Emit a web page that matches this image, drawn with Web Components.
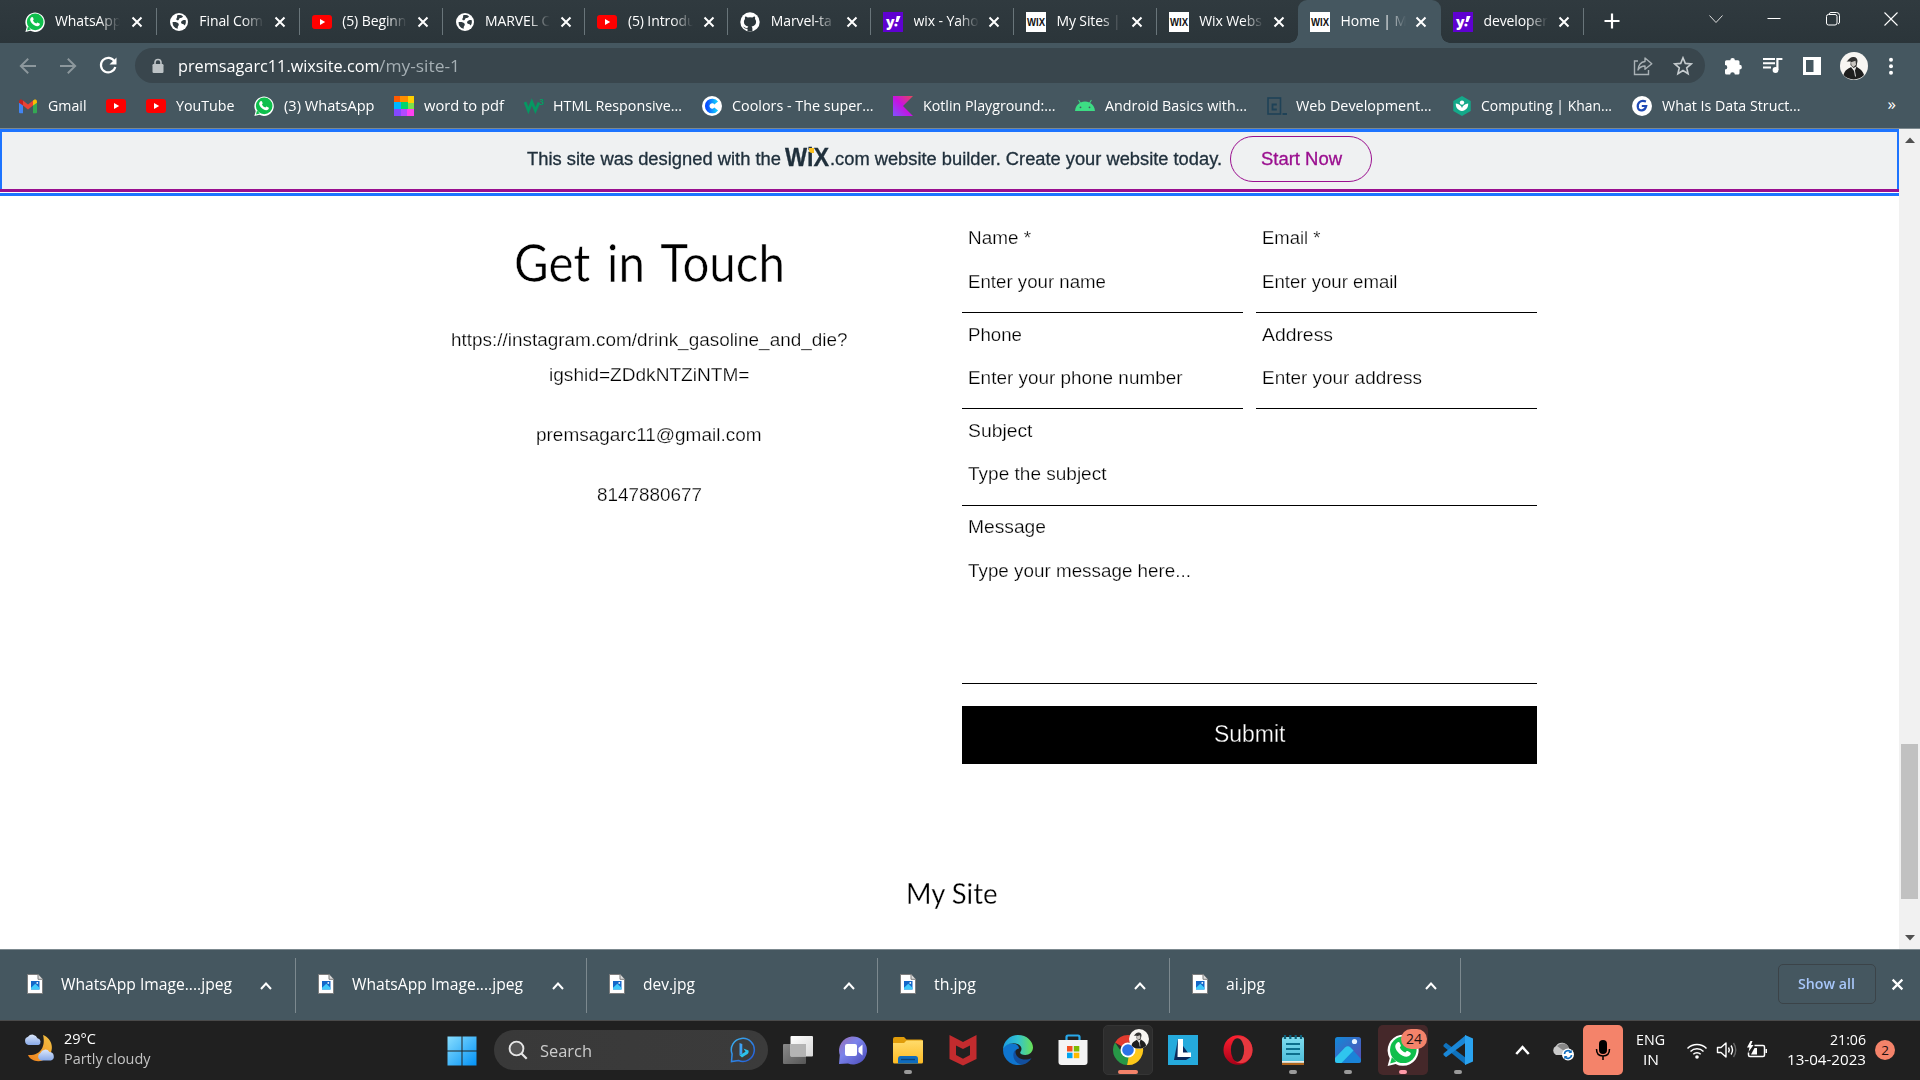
<!DOCTYPE html>
<html lang="en">
<head>
<meta charset="utf-8">
<title>Home | My Site 1</title>
<style>
  html, body { margin: 0; width: 1920px; height: 1080px; overflow: hidden; background: #fff; }
  body { font-family: "Open Sans", "Noto Sans", sans-serif; }
</style>
</head>
<body>
<desktop-screen></desktop-screen>
<script>
const ICONS = {
  whatsapp: [20, 20, `<path d="M.4 20l1.3-4.9A9.7 9.7 0 1 1 5.400 18.700z" fill="#fff"/><circle cx="10.200" cy="9.900" r="8.300" fill="#0fbf4c"/><path d="M2 18.400l1-3.800 2.800 2.800z" fill="#0fbf4c"/><path d="M6.300 5.500c.7-.8 1.400-.6 1.700.1l.6 1.400c.2.500-.1.800-.6 1.400.7 1.500 1.800 2.500 3.400 3.200.7-.8.900-1.200 1.500-.9l1.600.8c.6.300.4 1.100-.1 1.700-1.200 1.400-3 1.200-4.600.4-2.200-1.100-4.200-3.200-4.600-5.300-.2-1.200.3-2.100 1.100-2.800z" fill="#fff"/>`],
  globe: [20, 20, `<circle cx="10" cy="10" r="9" fill="#fff"/><path d="M3.500 10.200c2.600-.4 5.500.2 6.200 1.800.5 1.300-1 2-1 3.200v1.600A7 7 0 0 1 3.500 10.200zM8 3.400c2.500-.8 4.600-.2 6 1-.7 1.200-2 1.300-3 1.600-1.200.4-.6 1.700-1.800 2.200-.9.300-1.800-.2-1.900-1 0-1.200 1.300-1.500.7-3.800zM16.600 8c.6 2 .2 4-.9 5.600-.6-.9-.9-1.500-1.900-1.700-1.300-.2-2.100-1-1.600-2.200.6-1.400 2.500-1.900 4.400-1.700z" fill="#303b40"/>`],
  youtube: [20, 20, `<rect y="3" width="20" height="14" rx="3" fill="#f00"/><path d="M8 7l5.200 3L8 13z" fill="#fff"/>`],
  github: [20, 20, `<circle cx="10" cy="10" r="9.700" fill="#fff"/><path d="M7.500 19.500v-2.800c-3 .6-3.200-1.600-4.500-2 1.600-.4 2 1.200 3 1.300.700.100 1.200 0 1.600-.3.100-.6.400-1 .8-1.300-2.700-.3-4.500-1.500-4.500-4.600 0-1.100.4-2 1.100-2.700-.3-.8-.200-1.800.2-2.600 1 0 1.800.5 2.500 1a9 9 0 0 1 4.700 0c.7-.5 1.500-1 2.500-1 .4.800.4 1.800.1 2.600.7.700 1.100 1.600 1.100 2.700 0 3.100-1.900 4.300-4.500 4.600.5.500.8 1.200.8 2.100v3z" fill="#2c363b"/>`],
  yahoo: [20, 20, `<rect width="20" height="20" fill="#5f01d1"/><text x="3" y="14.500" font-family="Open Sans" font-weight="800" font-size="14" fill="#fff" textLength="9">y</text><path d="M13.700 4h3.800l-2.300 6h-2.600z" fill="#fff"/><circle cx="12.900" cy="13" r="1.600" fill="#fff"/>`],
  wix: [20, 20, `<rect width="20" height="20" fill="#fff"/><text x="1" y="13.800" font-family="Liberation Sans" font-weight="700" font-size="10.500" fill="#111" textLength="18" lengthAdjust="spacingAndGlyphs">WIX</text>`],
  x: [12, 12, `<path d="M1.500 1.500l9 9m0-9l-9 9" stroke="#fff" stroke-width="2" fill="none"/>`],
  plus: [16, 16, `<path d="M8 .5v15M.5 8h15" stroke="#fff" stroke-width="2.200"/>`],
  winChevron: [16, 16, `<path d="M1.500 4.500L8 11.500l6.500-7" stroke="#ddd" fill="none"/>`],
  winMin: [16, 16, `<path d="M1.500 7.500h13" stroke="#fff"/>`],
  winMax: [16, 16, `<rect x="1.500" y="3.500" width="10.500" height="10.500" rx="2" stroke="#fff" fill="none"/><path d="M4 3q.5-1.500 2-1.500h5.500q3 0 3 3v6.500q0 1.500-1.500 2" stroke="#fff" fill="none"/>`],
  winClose: [16, 16, `<path d="M1.500 1.500l13 13m0-13l-13 13" stroke="#fff" stroke-width="1.100"/>`],
  back: [18, 18, `<path d="M17 9H2m7.200-7.300L1.800 9l7.400 7.300" stroke="#8d989d" stroke-width="1.900" fill="none"/>`],
  forward: [18, 18, `<path d="M1 9h15M8.800 1.700L16.200 9l-7.400 7.300" stroke="#8d989d" stroke-width="1.900" fill="none"/>`],
  reload: [20, 20, `<path d="M16.500 5.300A7.300 7.300 0 1 0 17.300 11" stroke="#fff" stroke-width="2.200" fill="none"/><path d="M18.500 1.500v7h-7z" fill="#fff"/>`],
  lock: [12, 16, `<path d="M3 7V4.500a3 3 0 0 1 6 0V7" stroke="#bdc3c6" stroke-width="1.600" fill="none"/><rect x=".5" y="6" width="11" height="9" rx="1.200" fill="#bdc3c6"/>`],
  share: [20, 20, `<path d="M5 5H1.500v13.500h14V14" stroke="#a9b1b5" stroke-width="1.400" fill="none"/><path d="M12 2l6.800 5.800L12 13.300V10c-3.500 0-5.500 1.400-7 4 .4-4.500 2.600-8 7-8.500z" stroke="#a9b1b5" stroke-width="1.400" fill="none" stroke-linejoin="round"/>`],
  star: [20, 20, `<path d="M10 1.800l2.300 5.600 6 .5-4.600 3.900 1.400 5.900L10 14.500l-5.100 3.200 1.400-5.900-4.600-3.900 6-.5z" stroke="#c6cccf" stroke-width="1.600" fill="none"/>`],
  puzzle: [20, 20, `<path d="M7.300 4.200a2.300 2.300 0 1 1 4.600 0H15q1.500 0 1.500 1.500v3.100a2.400 2.400 0 1 1 0 4.800V17q0 1.500-1.500 1.500h-3.200a2.300 2.300 0 0 0-4.600 0H3.500Q2 18.500 2 17v-3.400a2.300 2.300 0 1 0 0-4.600V5.700q0-1.500 1.500-1.500z" fill="#fff"/>`],
  media: [20, 18, `<path d="M0 2h12M0 6.300h12M0 10.600h8" stroke="#fff" stroke-width="2"/><circle cx="12.500" cy="13" r="2.900" fill="#fff"/><path d="M14.400 13V2h5" stroke="#fff" stroke-width="2.200" fill="none"/>`],
  panel: [18, 18, `<path d="M0 0h18v18H0zM3 3v12h7.500V3z" fill="#fff" fill-rule="evenodd"/>`],
  avatar: [28, 28, `<circle cx="14" cy="14" r="14" fill="#f7f5f2"/><path d="M3.500 23C5 17.500 8 17 11 15l3.500 4.500 2-5c3 2.500 6 3.500 7.500 8.500A14 14 0 0 1 3.500 23z" fill="#1e1e1e"/><path d="M6.500 9.500c2-1 2.500-4 6.500-4.500 3-.3 4.500 1.500 4.500 4l-1 5.500-3 1.500-3-3 .2-3.500z" fill="#333"/><path d="M11 10.300l4.500-1.500.5 4-2.500 2.300-2-1.600z" fill="#c9c5c0"/><path d="M14 16l1.500 8.500" stroke="#ddd"/>`],
  dots: [6, 20, `<g fill="#fff"><circle cx="3" cy="3.700" r="2"/><circle cx="3" cy="10.300" r="2"/><circle cx="3" cy="16.800" r="2"/></g>`],
  gmail: [20, 20, `<path d="M1 6.500v9.700q0 1 1 1h3V8z" fill="#4285f4"/><path d="M19 6.500v9.700q0 1-1 1h-3V8z" fill="#34a853"/><path d="M1 5.500q0-2 2-2.200l2 1.300v5L1 6.800z" fill="#c5221f"/><path d="M19 5.500q0-2-2-2.200l-2 1.300v5l4-2.800z" fill="#fbbc04"/><path d="M5 4.600l5 3.800 5-3.800v5l-5 3.800-5-3.800z" fill="#ea4335"/>`],
  grid: [20, 20, `<path fill="#ff5a00" d="M0 0h6v6H0z"/><path fill="#ff8e00" d="M6 0h8v6H6z"/><path fill="#ffd000" d="M14 0h6v7h-6z"/><path fill="#00b7ff" d="M0 6h7v7H0z"/><path fill="#00d56e" d="M7 6h7v7H7z"/><path fill="#7be04b" d="M14 7h6v6h-6z"/><path fill="#8447ff" d="M0 13h7v7H0z"/><path fill="#b14aff" d="M7 13h6v7H7z"/><path fill="#ff40f0" d="M13 13h7v7h-7z"/>`],
  w3: [20, 20, `<path d="M1 6l3.400 8.500L7.800 6l3.600 8.500L15 6.500" stroke="#059862" stroke-width="2.800" fill="none"/><text x="15.500" y="9" font-family="Open Sans" font-weight="700" font-size="8" fill="#059862">3</text>`],
  coolors: [20, 20, `<defs><linearGradient id="a"><stop stop-color="#0a50ff"/><stop offset="1" stop-color="#12c8ff"/></linearGradient></defs><circle cx="10" cy="10" r="10" fill="#fff"/><path d="M14.200 7A5 5 0 1 0 14.200 13" stroke="url(#a)" stroke-width="4.600" fill="none"/>`],
  kotlin: [20, 20, `<defs><linearGradient id="a" x1="0" y1="1" x2="1" y2="0"><stop stop-color="#7f52ff"/><stop offset=".5" stop-color="#c811e1"/><stop offset="1" stop-color="#e54857"/></linearGradient></defs><path d="M0 0h20L10 10l10 10H0z" fill="url(#a)"/>`],
  android: [20, 20, `<path d="M0 15C.3 11 2.300 8.300 4.800 6.900L3.200 4.200l.8-.5 1.700 2.800a10.500 10.500 0 0 1 8.600 0L16 3.700l.8.500-1.600 2.700C17.700 8.300 19.700 11 20 15z" fill="#3ddc84"/><circle cx="5.500" cy="11.300" r=".9" fill="#455760"/><circle cx="14.500" cy="11.300" r=".9" fill="#455760"/>`],
  cbox: [20, 20, `<rect x="1" y="2" width="12.500" height="16" fill="none" stroke="#1f4257" stroke-width="1.600"/><path d="M9.800 8.500H5.500v5h4.300" stroke="#1f4257" stroke-width="1.800" fill="none"/><path d="M15.500 18h4.500" stroke="#1f4257" stroke-width="2"/>`],
  khan: [20, 20, `<path d="M10 0l8.700 5v10L10 20l-8.700-5V5z" fill="#14a98a"/><circle cx="10" cy="6.600" r="2.200" fill="#fff"/><path d="M3.800 7.500C7 7.800 9.300 9.500 10 12c.7-2.500 3-4.200 6.200-4.500.2 4.200-2.500 7.200-6.200 7.500-3.700-.3-6.400-3.300-6.200-7.500z" fill="#fff"/>`],
  gblue: [20, 20, `<circle cx="10" cy="10" r="10" fill="#fff"/><path d="M14 5.500C8 3.500 4.800 7.500 6 12c1.200 3.500 7 3.500 8.200-2H9.800" stroke="#1f49b6" stroke-width="2.200" fill="none"/>`],
  triUp: [12, 8, `<path d="M6 1.500l5 5.500H1z" fill="#505050"/>`],
  triDown: [12, 8, `<path d="M6 6.500L11 1H1z" fill="#505050"/>`],
  file: [16, 20, `<path d="M.5.500H11l4.500 4.800v14.200H.5z" fill="#fff" stroke="#7d7d7d"/><path d="M11 .5v4.800h4.500" fill="#ddd" stroke="#7d7d7d"/><rect x="4" y="7" width="8.500" height="8.500" fill="#1467c9"/><path d="M4 15.500v-1.700l4.300-4.100 4.200 4.100v1.700z" fill="#41c9fb"/><circle cx="10.300" cy="8.900" r=".9" fill="#fff"/>`],
  up: [12, 10, `<path d="M1 8l5-5.500L11 8" stroke="#fff" stroke-width="2" fill="none"/>`],
  weather: [32, 30, `<defs><linearGradient id="m" x1="1" y1="0" x2="0" y2="1"><stop stop-color="#f3c445"/><stop offset="1" stop-color="#f0811c"/></linearGradient><linearGradient id="c" x1="0" y1="0" x2="0" y2="1"><stop stop-color="#dbe7fb"/><stop offset="1" stop-color="#88a9e8"/></linearGradient></defs><path d="M19 2c10 4 12 16 4 23-6 5-16 4-19-3 12 1 18-8 15-20z" fill="url(#m)"/><path d="M4.500 12a4.300 4.300 0 0 1-.5-8.300 5.500 5.500 0 0 1 9.500 1.500A3.600 3.600 0 0 1 14.500 12z" fill="url(#c)"/><path d="M17 27.500a4 4 0 0 1-.5-7.500 5 5 0 0 1 9-1 4.400 4.400 0 0 1 1.500 8.500z" fill="url(#c)"/>`],
  windows: [30, 30, `<defs><linearGradient id="a" gradientUnits="userSpaceOnUse" x1="0" y1="0" x2="30" y2="30"><stop stop-color="#8adfff"/><stop offset="1" stop-color="#0090f5"/></linearGradient></defs><path d="M.5.500h14v14H.5zm15 0h14v14h-14zm-15 15h14v14H.5zm15 0h14v14h-14z" fill="url(#a)"/>`],
  search: [20, 20, `<circle cx="8.500" cy="8.500" r="6.900" stroke="#e6e6e6" stroke-width="1.900" fill="#555"/><path d="M13.500 13.500l5.200 5.200" stroke="#e6e6e6" stroke-width="2.200"/>`],
  bing: [26, 26, `<defs><linearGradient id="a" x1="0" y1="0" x2="1" y2="1"><stop stop-color="#3bb4f0"/><stop offset="1" stop-color="#2257d8"/></linearGradient></defs><path d="M1.500 24.500l.6-7.500A11.500 11.500 0 1 1 8.500 23.500z" fill="none" stroke="url(#a)" stroke-width="1.500"/><path d="M9.500 6l2.800 1v9.500l-2.800 1.800z" fill="#3da2f5"/><path d="M9.500 18.300l6-3.500-2-3.300 5 2q.8 3-2.700 4.600l-3.800 2.300z" fill="#2bc2ec"/>`],
  taskview: [32, 32, `<defs><linearGradient id="a" x1="0" y1="0" x2="1" y2="1"><stop stop-color="#fff"/><stop offset="1" stop-color="#d8d8d8"/></linearGradient><linearGradient id="b" x1="0" y1="0" x2="1" y2="1"><stop stop-color="#8a8a8a"/><stop offset="1" stop-color="#565656"/></linearGradient></defs><rect x="1" y="10" width="23" height="20" rx="1" fill="url(#b)"/><rect x="8.500" y="2" width="22.500" height="20.500" rx="1" fill="url(#a)"/><path d="M8.500 10H24v12.500H8.500z" fill="#b4b4b4"/>`],
  chat: [32, 32, `<defs><linearGradient id="a" x1="0" y1="0" x2="1" y2="1"><stop stop-color="#9d6cb0"/><stop offset=".4" stop-color="#7b83eb"/><stop offset="1" stop-color="#4a4ab8"/></linearGradient></defs><path d="M2 30l.8-9A14 14 0 1 1 11 29.500z" fill="url(#a)"/><rect x="8" y="10" width="12" height="12" rx="2" fill="#fff"/><path d="M21.500 14l4-3.500v11l-4-3.500z" fill="#fff"/>`],
  folder: [32, 32, `<defs><linearGradient id="a" x1="0" y1="0" x2="0" y2="1"><stop stop-color="#ffdb6b"/><stop offset="1" stop-color="#fdbb24"/></linearGradient></defs><path d="M1 5q0-2 2-2h9l2.500 2.500H29q2 0 2 2v5H1z" fill="#e09c0a"/><path d="M1 9h11l2.500-2.500H31V28q0 1.500-1.500 1.500h-27Q1 29.500 1 28z" fill="url(#a)"/><path d="M6 29.500V25q0-3 2.500-3h15q2.500 0 2.500 3v4.500z" fill="#0f6cbd"/><path d="M9 25.500h14" stroke="#0a4378" stroke-width="1.300"/>`],
  mcafee: [32, 32, `<path d="M2.500 1L16 8l13.500-7v24L16 31.500 2.500 25zM9 11.500V21l7 3.700 7-3.700v-9.500L16 15z" fill="#c22b2e" fill-rule="evenodd"/>`],
  edge: [32, 32, `<defs><linearGradient id="a"><stop stop-color="#1b9de2"/><stop offset=".5" stop-color="#33c3d0"/><stop offset="1" stop-color="#6ae254"/></linearGradient></defs><path d="M1 16C2 11 6 9.500 10 9.500c4 0 7 2 7 5-3 .5-5 3-4.500 7 .6 4 4 8 9 8.500A15 15 0 0 1 1 16z" fill="#0f75cf"/><path d="M1 16C1.300 7 8 1 16 1c9 0 15 6.500 15 12.500 0 4.500-3.500 7.500-7.800 7.500-3.200 0-5-1-5-2.200 0-1 1.300-1.700 1.300-4 0-3-3.500-5.500-8-5.500C6 9.300 2 12.500 1 16z" fill="url(#a)"/><path d="M13.500 15.800c-5 5.200-1 14.700 7.500 14.700 3.500-.7 6.500-3 8.500-6.300-7 3.300-17 .8-16-8.400z" fill="#124f9e"/>`],
  store: [32, 32, `<path d="M9.500 8V3q0-1.500 1.500-1.500h10q1.500 0 1.500 1.500v5" fill="none" stroke="#28a8ea" stroke-width="2.200"/><path d="M1.500 6h29v22q0 3-3 3h-23q-3 0-3-3z" fill="#f4f4f4"/><path fill="#f25022" d="M10 12h5.500v5.500H10z"/><path fill="#7fba00" d="M16.800 12h5.500v5.500h-5.500z"/><path fill="#00a4ef" d="M10 18.700h5.500v5.500H10z"/><path fill="#ffb900" d="M16.800 18.700h5.500v5.500h-5.500z"/>`],
  chrome: [32, 32, `<path d="M16 16L3 8.500A15 15 0 0 1 29 8.500H16z" fill="#e23b2e"/><path d="M16 16l13-7.500A15 15 0 0 1 15 31z" fill="#fdc81a"/><path d="M3 8.500L11 20l6 1-2 10A15 15 0 0 1 3 8.500z" fill="#279847"/><circle cx="16" cy="16" r="7.500" fill="#fff"/><circle cx="16" cy="16" r="5.800" fill="#2b73e8"/>`],
  lapp: [32, 32, `<rect x="1" y="1" width="30" height="30" fill="#25aadc"/><path d="M11 5L7 26h12l5-3z" fill="#0b2a5c"/><path d="M11 5h5v13.500h8V23H10.500z" fill="#fff"/>`],
  opera: [32, 32, `<defs><linearGradient id="a" x1="0" y1="0" x2="0" y2="1"><stop stop-color="#ff2030"/><stop offset="1" stop-color="#a80018"/></linearGradient></defs><ellipse cx="16" cy="16" rx="14.500" ry="14.800" fill="url(#a)"/><path d="M13 4.500c8-5 17.500 2 17.500 11.500S21 32.500 13 27.500h3V4.500z" fill="#e8383f"/><ellipse cx="15.500" cy="16" rx="6.600" ry="11.700" fill="#202020"/>`],
  notepad: [32, 32, `<defs><linearGradient id="a" x1="0" y1="0" x2="0" y2="1"><stop stop-color="#7fdcee"/><stop offset="1" stop-color="#48bbd8"/></linearGradient></defs><rect x="5" y="3" width="22" height="28" rx="1.500" fill="url(#a)"/><path d="M5 28.500h22V31H5z" fill="#b0651c"/><path d="M5 27h22v1.700H5z" fill="#f0ece4"/><path d="M8 1v4m5.300-4v4M18.700 1v4M24 1v4" stroke="#0d607a" stroke-width="2.200"/><path d="M9 10h14M9 15h14M9 20h14" stroke="#0d6f8c" stroke-width="2"/>`],
  photos: [32, 32, `<defs><linearGradient id="a" x1="0" y1="0" x2="1" y2="1"><stop stop-color="#1289d8"/><stop offset="1" stop-color="#5b4cb4"/></linearGradient></defs><rect x="3" y="3" width="26" height="26" rx="2.500" fill="url(#a)"/><path d="M16 12q1.500 0 3 2l10 11v1.500q0 2.500-2.500 2.500H9z" fill="#1a84d8"/><path d="M3 24l10-10.500q2.700-2.700 5.500 0l3 3L9.500 29h-4Q3 29 3 26.500z" fill="#2fc6ee"/><circle cx="22.500" cy="7.500" r="2.600" fill="#e8f4ff"/>`],
  vscode: [32, 32, `<path d="M1.500 11L4 8.700 24 24v7L1.500 12.500z" fill="#0f72bd"/><path d="M1.500 21L4 23.300 24 8.500V1L1.500 19.500z" fill="#1a87d7"/><path d="M23 1l8 3.500v23L23 31z" fill="#2aa3f0"/>`],
  cloud: [24, 24, `<path d="M5 17a5 5 0 0 1 0-9 7 7 0 0 1 12.500 1.500q2 2 1 7.500z" fill="#c9c9c9"/><path d="M6 8a7 7 0 0 1 12 2l-5 3z" fill="#888"/><circle cx="17" cy="16.500" r="6" fill="#fff"/><path d="M13.500 16a3.600 3.600 0 0 1 6.500-1.800M20.500 17A3.600 3.600 0 0 1 14 18.800" stroke="#0f6cbd" stroke-width="1.600" fill="none"/><path d="M20.700 11.800v3.200h-3.200zM13.300 21.200V18h3.200z" fill="#0f6cbd"/>`],
  mic: [20, 24, `<rect x="6" y="2" width="8" height="14" rx="4" fill="#000"/><path d="M3.500 11c0 4.500 2.500 7 6.500 7s6.500-2.500 6.500-7M10 18v4" stroke="#000" stroke-width="1.500" fill="none"/>`],
  wifi: [22, 20, `<g fill="none" stroke="#fff" stroke-width="1.500"><path d="M1.500 8.500a13.500 13.500 0 0 1 19 0"/><path d="M4.500 11.500a9.300 9.300 0 0 1 13 0"/><path d="M7.300 14.300a5.300 5.300 0 0 1 7.400 0"/></g><circle cx="11" cy="17" r="1.800" fill="#fff"/>`],
  sound: [22, 20, `<path d="M1.500 7.500H5L10 3v14L5 12.500H1.500z" fill="none" stroke="#fff" stroke-width="1.400" stroke-linejoin="round"/><path d="M12.500 7.500q1.600 2.500 0 5M15 5.500q3 4.500 0 9" fill="none" stroke="#fff" stroke-width="1.400"/><path d="M17.500 3q4.500 7 0 14" fill="none" stroke="#666" stroke-width="1.400"/>`],
  battery: [22, 20, `<path d="M8.500 5.500H17q1.500 0 1.500 1.500v8q0 1.500-1.500 1.500H4q-1.500 0-1.500-1.500v-2.500" fill="none" stroke="#fff" stroke-width="1.500"/><path d="M19.500 9h1.500v4h-1.500z" fill="#fff"/><path d="M5 14.500L8.500 8H11v6.500z" fill="#fff"/><path d="M4.500 1L1 7.500h2.500L2.500 12l5-7H5L6.500 1z" fill="#fff"/>`],
};

function define(name, css, html, setup) {
  const tpl = document.createElement('template');
  tpl.innerHTML = `<style>:host{display:block;box-sizing:border-box}*{box-sizing:border-box}${css}</style>${html}`;
  customElements.define(name, class extends HTMLElement {
    connectedCallback() {
      if (this.shadowRoot) return;
      const root = this.attachShadow({ mode: 'open' });
      const frag = tpl.content.cloneNode(true);
      if (this.hasAttribute('icon')) frag.querySelector('.icon').setAttribute('name', this.getAttribute('icon'));
      root.append(frag);
      if (setup) setup(this, root);
    }
  });
}

/* Inline SVG picked by name */
define('ui-icon', ':host{display:block;flex:none}svg{display:block}', '<div></div>', (el, root) => {
  const [w, h, body] = ICONS[el.getAttribute('name')];
  const s = +(el.getAttribute('size') || w);
  root.querySelector('div').innerHTML = `<svg width="${s}" height="${s * h / w}" viewBox="0 0 ${w} ${h}">${body}</svg>`;
});

define('browser-tab', `
  :host{display:flex;align-items:center;width:142.85px;height:43px;padding:0 12.500px 0 12px;border-right:1px solid #5f6b71;color:#fff;font-size:14px;position:relative;border-image:linear-gradient(transparent 9px,#69757a 9px,#69757a 34px,transparent 34px) 1}
  :host([flat]){border-color:transparent;border-image:none}
  :host([active]){background:#455760;border-radius:9px 9px 0 0;border-image:none;border-color:transparent}
  :host([active])::before,:host([active])::after{content:"";position:absolute;bottom:0;width:9px;height:9px}
  :host([active])::before{left:-9px;background:radial-gradient(circle at 0 0,transparent 8.5px,#455760 9px)}
  :host([active])::after{right:-10px;background:radial-gradient(circle at 100% 0,transparent 8.5px,#455760 9px)}
  .t{margin-left:10.500px;width:65px;overflow:hidden;white-space:nowrap;line-height:41px;padding-bottom:2px;letter-spacing:-.1px;-webkit-mask-image:linear-gradient(90deg,#000 44px,transparent 65px)}
  .close{margin-left:auto}`,
  `<ui-icon class="icon"></ui-icon><div class="t"><slot></slot></div><ui-icon class="close" name="x"></ui-icon>`);

define('tab-strip', `
  :host{display:flex;height:43px;background:linear-gradient(#303a3f,#2b353a);padding-left:12.500px}
  .first{width:144.350px}
  .last{width:141.350px}
  .plus{margin:13px 0 0 20px}
  .win{display:flex;gap:42.500px;margin:11px 21px 0 auto}
  .drop{margin-right:3px}`,
  `<browser-tab class="first" icon="whatsapp">WhatsApp</browser-tab><browser-tab icon="globe">Final Com</browser-tab><browser-tab icon="youtube">(5) Beginn</browser-tab><browser-tab icon="globe">MARVEL C</browser-tab><browser-tab icon="youtube">(5) Introdu</browser-tab><browser-tab icon="github">Marvel-ta</browser-tab><browser-tab icon="yahoo">wix - Yaho</browser-tab><browser-tab icon="wix">My Sites |</browser-tab><browser-tab class="last" icon="wix" flat>Wix Webs</browser-tab><browser-tab icon="wix" active>Home | M</browser-tab><browser-tab icon="yahoo">developer</browser-tab>
   <ui-icon class="plus" name="plus"></ui-icon>
   <div class="win"><ui-icon name="winChevron"></ui-icon><ui-icon name="winMin"></ui-icon><ui-icon name="winMax"></ui-icon><ui-icon name="winClose"></ui-icon></div>`);

define('address-bar', `
  :host{display:flex;align-items:center;height:45px;padding:0 26px 0 19px;background:#455760}
  .nav{display:flex;gap:21.500px;width:116px;align-items:center;flex:none}
  .box{display:flex;align-items:center;width:1570px;height:35px;border-radius:18px;background:#39464d;padding:0 12.500px 0 17px;font-size:16.500px;color:#fff;flex:none}
  .u{display:flex;margin-left:13.500px;line-height:35px}
  .dim{color:#a5afb4}
  .r{display:flex;gap:20px;margin-left:auto}
  .ext{display:flex;align-items:center;justify-content:space-between;width:171px;margin-left:18px}`,
  `<div class="nav"><ui-icon name="back"></ui-icon><ui-icon name="forward"></ui-icon><ui-icon name="reload"></ui-icon></div>
   <div class="box"><ui-icon name="lock"></ui-icon><div class="u"><fit-text w="201.500">premsagarc11.wixsite.com</fit-text><fit-text class="dim" w="81">/my-site-1</fit-text></div>
   <div class="r"><ui-icon name="share"></ui-icon><ui-icon name="star"></ui-icon></div></div>
   <div class="ext"><ui-icon name="puzzle"></ui-icon><ui-icon name="media"></ui-icon><ui-icon name="panel"></ui-icon><ui-icon name="avatar"></ui-icon><ui-icon name="dots"></ui-icon></div>`);

/* One bookmark: 20px icon, then a label fitted to its width */
define('book-mark', `:host{display:flex;align-items:center;gap:9.500px;margin-right:20px;color:#fff;font-size:14px;line-height:36px}`,
  `<ui-icon class="icon"></ui-icon><slot></slot>`);

define('bookmark-bar', `
  :host{display:flex;height:41px;padding:0 24px 5px 18px;background:#455760;border-bottom:1px solid #7c898f}
  .more{margin-left:auto;color:#fff;font-size:17px;line-height:31px}`,
  `<book-mark icon="gmail"><fit-text w="38.500">Gmail</fit-text></book-mark><book-mark icon="youtube"></book-mark><book-mark icon="youtube"><fit-text w="58.500">YouTube</fit-text></book-mark><book-mark icon="whatsapp"><fit-text w="90.500">(3) WhatsApp</fit-text></book-mark><book-mark icon="grid"><fit-text w="80">word to pdf</fit-text></book-mark><book-mark icon="w3"><fit-text w="129">HTML Responsive...</fit-text></book-mark><book-mark icon="coolors"><fit-text w="141.500">Coolors - The super...</fit-text></book-mark><book-mark icon="kotlin"><fit-text w="132.500">Kotlin Playground:...</fit-text></book-mark><book-mark icon="android"><fit-text w="142">Android Basics with...</fit-text></book-mark><book-mark icon="cbox"><fit-text w="135.500">Web Development...</fit-text></book-mark><book-mark icon="khan"><fit-text w="131">Computing | Khan...</fit-text></book-mark><book-mark icon="gblue"><fit-text w="138.500">What Is Data Struct...</fit-text></book-mark><span class="more">»</span>`);

define('wix-banner', `
  :host{height:67px;background:#fff;border-bottom:3px solid #1d74ff;font-family:"Liberation Sans",sans-serif;font-size:17.500px;color:#20303c}
  .in{display:flex;align-items:center;height:60px;background:#eff1f2;border:3px solid #1d74ff;border-bottom:0;border-left-width:2px;border-right-width:2px;padding:0 0 3px 525px}
  .rule{height:3px;background:#9a0f8f}
  .in fit-text{-webkit-text-stroke:.3px currentColor}
  .logo{position:relative;margin:-4px 1px 0 4px;font-size:25px;font-weight:700}
  .logo::after{content:"";position:absolute;left:24px;top:5px;width:5px;height:5px;background:#fdc11e;border-radius:0 0 0 3px}
  .btn{display:flex;align-items:center;justify-content:center;width:142px;height:46px;margin-left:8px;border:1px solid #9a0f8f;border-radius:23px;color:#9a0f8f}`,
  `<div class="in"><fit-text w="254">This site was designed with the</fit-text><div class="logo"><fit-text w="44">WiX</fit-text></div><fit-text w="392">.com website builder. Create your website today.</fit-text><div class="btn"><fit-text w="81">Start Now</fit-text></div></div><div class="rule"></div>`);

define('form-field', `
  :host{display:flex;flex-direction:column;padding:var(--top,7px) 0 0 6px;border-bottom:1px solid #000;height:var(--h,96px)}
  .l{height:30px;line-height:30px}.p{margin-top:var(--gap,8px);line-height:40px;height:40px}`,
  `<div class="l"><slot name="label"></slot></div><div class="p"><slot></slot></div>`);

define('contact-form', `
  :host{width:575px}
  .row{display:flex;gap:13px}.row>*{flex:1}
  .btn{display:flex;align-items:center;justify-content:center;height:58px;margin-top:22px;background:#000;color:#fff;font-size:23px;line-height:56px;padding-bottom:2px}
  form-field fit-text{-webkit-text-stroke:.25px #fff}
  .btn fit-text{-webkit-text-stroke:.3px #000}`,
  `<div class="row"><form-field style="--top:27px;--gap:9px;--h:117px"><fit-text slot="label" w="63">Name *</fit-text><fit-text w="138">Enter your name</fit-text></form-field><form-field style="--top:27px;--gap:9px;--h:117px"><fit-text slot="label" w="58.500">Email *</fit-text><fit-text w="135.500">Enter your email</fit-text></form-field></div>
   <div class="row"><form-field><fit-text slot="label" w="54">Phone</fit-text><fit-text w="214.500">Enter your phone number</fit-text></form-field><form-field><fit-text slot="label" w="71">Address</fit-text><fit-text w="160">Enter your address</fit-text></form-field></div>
   <form-field style="--h:97px"><fit-text slot="label" w="64.500">Subject</fit-text><fit-text w="138.500">Type the subject</fit-text></form-field>
   <form-field style="--h:178px;--top:6px;--gap:9px"><fit-text slot="label" w="78">Message</fit-text><fit-text w="223">Type your message here...</fit-text></form-field>
   <div class="btn"><fit-text w="71.500">Submit</fit-text></div>`);

define('contact-info', `
  :host{display:flex;flex-direction:column;align-items:center;width:424px;padding-top:36px}
  h2{margin:0 0 30px;font:400 52px/60px Lato,sans-serif;word-spacing:5px}
  h2 fit-text{-webkit-text-stroke:.6px #fff}
  p{display:flex;flex-direction:column;align-items:center;width:424px;margin:0 0 25px;line-height:35px}
  p fit-text{-webkit-text-stroke:.25px #fff}`,
  `<h2><fit-text w="271">Get in Touch</fit-text></h2><p><fit-text w="396.500">https://instagram.com/drink_gasoline_and_die?</fit-text><fit-text w="200.500">igshid=ZDdkNTZiNTM=</fit-text></p><p><fit-text w="225.500">premsagarc11@gmail.com</fit-text></p><p><fit-text w="105">8147880677</fit-text></p>`);

define('scroll-bar', `
  :host{display:flex;flex-direction:column;align-items:center;width:21px;height:820px;background:#f1f1f1;padding:7px 0 7px}
  .th{width:17px;height:155px;background:#c1c1c1;margin-top:600px}
  .dn{margin-top:auto}`,
  `<ui-icon name="triUp"></ui-icon><div class="th"></div><ui-icon class="dn" name="triDown"></ui-icon>`);

define('web-page', `
  :host{display:flex;height:820px;background:#fff;color:#000}
  .page{width:1899px}
  .cols{display:flex;padding-left:437px;gap:101px;font:18.750px "Liberation Sans",sans-serif;height:672px}
  .foot{padding-left:905.500px;font:400 28px/34px Lato,sans-serif;margin-top:8px}
  .foot fit-text{-webkit-text-stroke:.3px #fff}`,
  `<div class="page"><wix-banner></wix-banner><div class="cols"><contact-info></contact-info><contact-form></contact-form></div><div class="foot"><fit-text w="91.500">My Site</fit-text></div></div><scroll-bar></scroll-bar>`);

define('download-item', `
  :host{display:flex;align-items:center;width:291.300px;height:55px;padding:0 22.500px 3px 22px;border-right:1px solid #7c898f;color:#fff;font-size:15.500px;line-height:52px}
  .t{margin-left:18px}.c{margin:3px 0 0 auto}`,
  `<ui-icon name="file"></ui-icon><div class="t"><slot></slot></div><ui-icon class="c" name="up"></ui-icon>`);

define('download-bar', `
  :host{display:flex;height:72px;padding:8px 16px 0 4.500px;background:#455760;border-top:1px solid #7c898f;border-bottom:1px solid #4a4a4a}
  .all{display:flex;justify-content:center;width:98px;height:40px;margin:6px 15.500px 0 auto;border:1px solid #3b4348;border-radius:5px;color:#a8c7fa;font-size:14px;font-weight:600;line-height:38px}
  .x{margin-top:20px}`,
  `<download-item><fit-text w="171">WhatsApp Image....jpeg</fit-text></download-item><download-item><fit-text w="171">WhatsApp Image....jpeg</fit-text></download-item><download-item><fit-text w="52">dev.jpg</fit-text></download-item><download-item><fit-text w="42">th.jpg</fit-text></download-item><download-item><fit-text w="39">ai.jpg</fit-text></download-item>
   <div class="all"><fit-text w="57">Show all</fit-text></div><ui-icon class="x" name="x" size="13"></ui-icon>`);

define('task-button', `
  :host{width:55px;height:59px;padding:4px 2.500px}
  .b{position:relative;display:flex;justify-content:center;align-items:center;height:50px;border-radius:5px;border:1px solid transparent}
  :host([on]) .b{background:#2d2d2d;border-color:#353535}
  :host([alert]) .b{background:#45282a}
  .dot{display:none;position:absolute;bottom:0;left:50%;width:8px;height:4px;border-radius:2px;background:#9a9a9a;transform:translateX(-50%)}
  :host([run]) .dot{display:block}
  :host([on]) .dot{width:20px;background:#f4836a}
  :host([alert]) .dot{background:#ff9aa8}`,
  `<div class="b"><ui-icon class="icon" size="32"></ui-icon><span class="dot"></span><slot></slot></div>`);

define('task-bar', `
  :host{display:flex;height:59px;background:#202020;color:#fff;font-size:15px}
  .wx{display:flex;width:446.500px;padding:12px 0 0 24px;gap:8px;flex:none}
  .two{display:flex;flex-direction:column;line-height:20px;font-size:14.500px;margin-top:-1px}
  .dim{color:#c4c4c4}
  .win{margin:14.500px 17px 0 0}
  .search{display:flex;align-items:center;width:274px;height:40px;margin-top:9px;border-radius:20px;background:linear-gradient(90deg,#393939,#3b3b3b);padding:0 11.500px 0 14px;color:#ccc;font-size:16px;flex:none}
  .search fit-text{margin-left:12px;line-height:42px;padding-top:1px}.search .b{margin-left:auto}
  .apps{display:flex;margin-left:3px;flex:none}
  .av{position:absolute;right:3px;top:3px}
  .badge{position:absolute;right:0;top:3px;width:26px;height:20px;border-radius:10px;background:#f4836a;color:#201010;text-align:center;font-size:14px;line-height:20px}
  .tray{display:flex;align-items:center;width:434px;height:58px}
  .mic{display:flex;align-items:center;justify-content:center;width:40px;height:50px;border-radius:5px;background:#f4836a;margin-left:8px}
  .lang{align-items:center;width:32px;margin:0 0 0 12px}
  .st{display:flex;gap:8px;margin-left:19.500px}
  .clock{align-items:flex-end;width:80px;margin-left:18px}
  .n{width:20px;height:20px;border-radius:50%;background:#f4836a;color:#201010;font-size:13.500px;line-height:20px;text-align:center;margin-left:9px}`,
  `<div class="wx"><ui-icon name="weather"></ui-icon><div class="two" style="margin-top:-4px"><fit-text w="32">29°C</fit-text><fit-text class="dim" w="86.500">Partly cloudy</fit-text></div></div>
   <ui-icon class="win" name="windows"></ui-icon>
   <div class="search"><ui-icon name="search"></ui-icon><fit-text w="52">Search</fit-text><ui-icon class="b" name="bing"></ui-icon></div>
   <div class="apps"><task-button icon="taskview"></task-button><task-button icon="chat"></task-button><task-button icon="folder" run></task-button><task-button icon="mcafee"></task-button><task-button icon="edge"></task-button><task-button icon="store"></task-button><task-button icon="chrome" on run><ui-icon class="av" name="avatar" size="20"></ui-icon></task-button><task-button icon="lapp"></task-button><task-button icon="opera"></task-button><task-button icon="notepad" run></task-button><task-button icon="photos" run></task-button><task-button icon="whatsapp" alert run><span class="badge">24</span></task-button><task-button icon="vscode" run></task-button></div>
   <div class="tray"><ui-icon name="up" size="15" style="margin-left:29px"></ui-icon><ui-icon name="cloud" style="margin-left:21px"></ui-icon><div class="mic"><ui-icon name="mic"></ui-icon></div>
   <div class="two lang"><fit-text w="29">ENG</fit-text><fit-text w="16">IN</fit-text></div>
   <div class="st"><ui-icon name="wifi"></ui-icon><ui-icon name="sound"></ui-icon><ui-icon name="battery"></ui-icon></div>
   <div class="two clock"><fit-text w="36">21:06</fit-text><fit-text w="79">13-04-2023</fit-text></div><div class="n">2</div></div>`);

define('desktop-screen', `:host{display:flex;flex-direction:column;width:1920px;height:1080px}`,
  `<tab-strip></tab-strip><address-bar></address-bar><bookmark-bar></bookmark-bar><web-page></web-page><download-bar></download-bar><task-bar></task-bar>`);

/* Text run condensed or widened to the width given in its w attribute */
define('fit-text', `:host{display:inline-block;flex:none;white-space:nowrap}span{display:inline-block;transform-origin:0 50%}`, `<span><slot></slot></span>`, (el, root) => {
  const s = root.querySelector('span'), w = +el.getAttribute('w');
  const n = s.getBoundingClientRect().width;
  el.style.width = w + 'px';
  if (n) s.style.transform = `scaleX(${w / n})`;
});
</script>
</body>
</html>
